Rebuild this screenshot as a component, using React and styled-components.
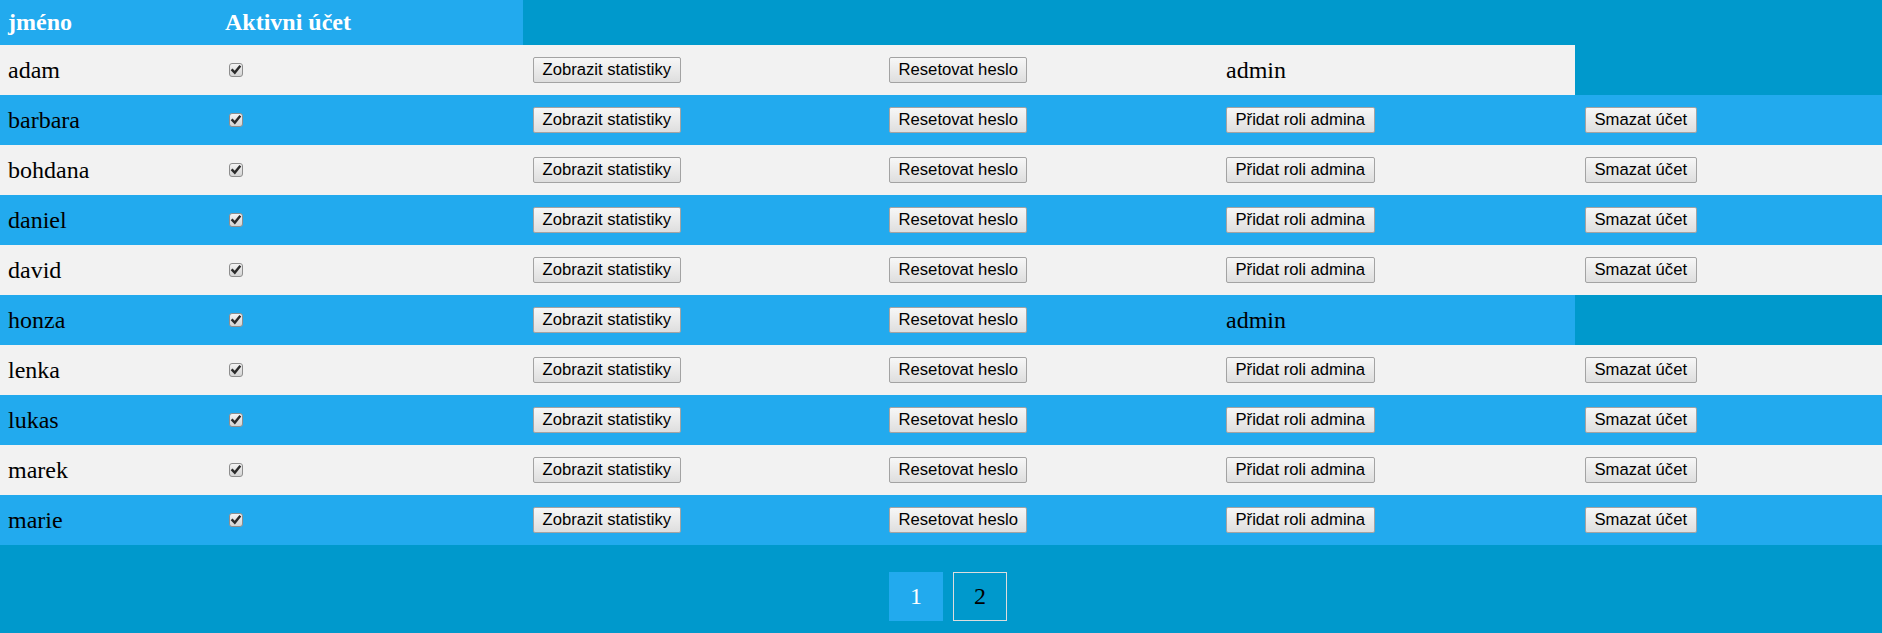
import styled, { createGlobalStyle } from "styled-components";

const Colors = {
  page: "#0099cc",
  blue: "#22aaee",
  light: "#f2f2f2",
};

const GlobalStyle = createGlobalStyle`
  html, body {
    margin: 0;
    padding: 0;
    background: ${Colors.page};
    font-family: "Liberation Serif", "Times New Roman", serif;
  }
`;

const users = [
  { name: "adam", admin: true },
  { name: "barbara" },
  { name: "bohdana" },
  { name: "daniel" },
  { name: "david" },
  { name: "honza", admin: true },
  { name: "lenka" },
  { name: "lukas" },
  { name: "marek" },
  { name: "marie" },
];

const widths = [215, 308, 356, 337, 359, 307];

function CheckMark() {
  return (
    <CheckBox viewBox="0 0 14 14" aria-hidden="true">
      <defs>
        <linearGradient id="cbg" x1="0" y1="0" x2="0" y2="1">
          <stop offset="0" stopColor="#f4f4f4" />
          <stop offset="1" stopColor="#d2d2d2" />
        </linearGradient>
      </defs>
      <rect x="0.5" y="0.5" width="13" height="13" rx="2.5" fill="url(#cbg)" stroke="#8e8e8e" />
      <path
        d="M3.4 7.2 L5.8 9.6 L10.6 3.6"
        fill="none"
        stroke="#2b2b2b"
        strokeWidth="2.4"
        strokeLinecap="square"
      />
    </CheckBox>
  );
}

function App() {
  return (
    <>
      <GlobalStyle />
      <Table>
        <colgroup>
          {widths.map((w, i) => (
            <col key={i} style={{ width: w }} />
          ))}
        </colgroup>
        <thead>
          <HeadRow>
            <HeadCell>jméno</HeadCell>
            <HeadCell>Aktivni účet</HeadCell>
          </HeadRow>
        </thead>
        <tbody>
          {users.map((u, i) => (
            <Row key={u.name} $alt={i % 2 === 1}>
              <Cell>{u.name}</Cell>
              <Cell>
                <CheckMark />
              </Cell>
              <Cell>
                <Button>Zobrazit statistiky</Button>
              </Cell>
              <Cell>
                <Button>Resetovat heslo</Button>
              </Cell>
              {u.admin ? (
                <Cell>admin</Cell>
              ) : (
                <>
                  <Cell>
                    <Button>Přidat roli admina</Button>
                  </Cell>
                  <Cell>
                    <Button>Smazat účet</Button>
                  </Cell>
                </>
              )}
            </Row>
          ))}
        </tbody>
      </Table>
      <Pager>
        <PageButton $active>1</PageButton>
        <PageButton>2</PageButton>
      </Pager>
    </>
  );
}

const Table = styled.table`
  width: 100%;
  table-layout: fixed;
  border-collapse: collapse;
  border-spacing: 0;
`;

const HeadRow = styled.tr`
  height: 45px;
`;

const HeadCell = styled.th`
  background: ${Colors.blue};
  color: white;
  font-size: 24px;
  font-weight: bold;
  text-align: left;
  padding: 0 10px;
  &:first-child {
    padding-left: 8px;
  }
`;

const Row = styled.tr`
  height: 50px;
  & > td {
    background: ${(p) => (p.$alt ? Colors.blue : Colors.light)};
  }
`;

const Cell = styled.td`
  font-size: 24px;
  color: #000;
  padding: 0 10px;
  vertical-align: middle;
  &:first-child {
    padding-left: 8px;
  }
`;

const CheckBox = styled.svg`
  display: block;
  width: 14px;
  height: 14px;
  margin-left: 4px;
`;

const Button = styled.button`
  font-family: "Liberation Sans", Arial, sans-serif;
  font-size: 16.67px;
  height: 26px;
  padding: 0 8.5px;
  color: #000;
  border: 1px solid #a3a3a3;
  border-radius: 2px;
  background: linear-gradient(#f7f7f7, #dedede);
  display: block;
  white-space: nowrap;
  cursor: pointer;
`;

const Pager = styled.div`
  display: flex;
  justify-content: center;
  gap: 10px;
  padding: 27px 0 12px 14px;
`;

const PageButton = styled.div`
  box-sizing: border-box;
  width: 54px;
  height: 49px;
  display: flex;
  align-items: center;
  justify-content: center;
  font-size: 24px;
  color: ${(p) => (p.$active ? "white" : "#000")};
  background: ${(p) => (p.$active ? Colors.blue : "transparent")};
  border: 1px solid ${(p) => (p.$active ? Colors.blue : "#dddddd")};
`;

export default App;
